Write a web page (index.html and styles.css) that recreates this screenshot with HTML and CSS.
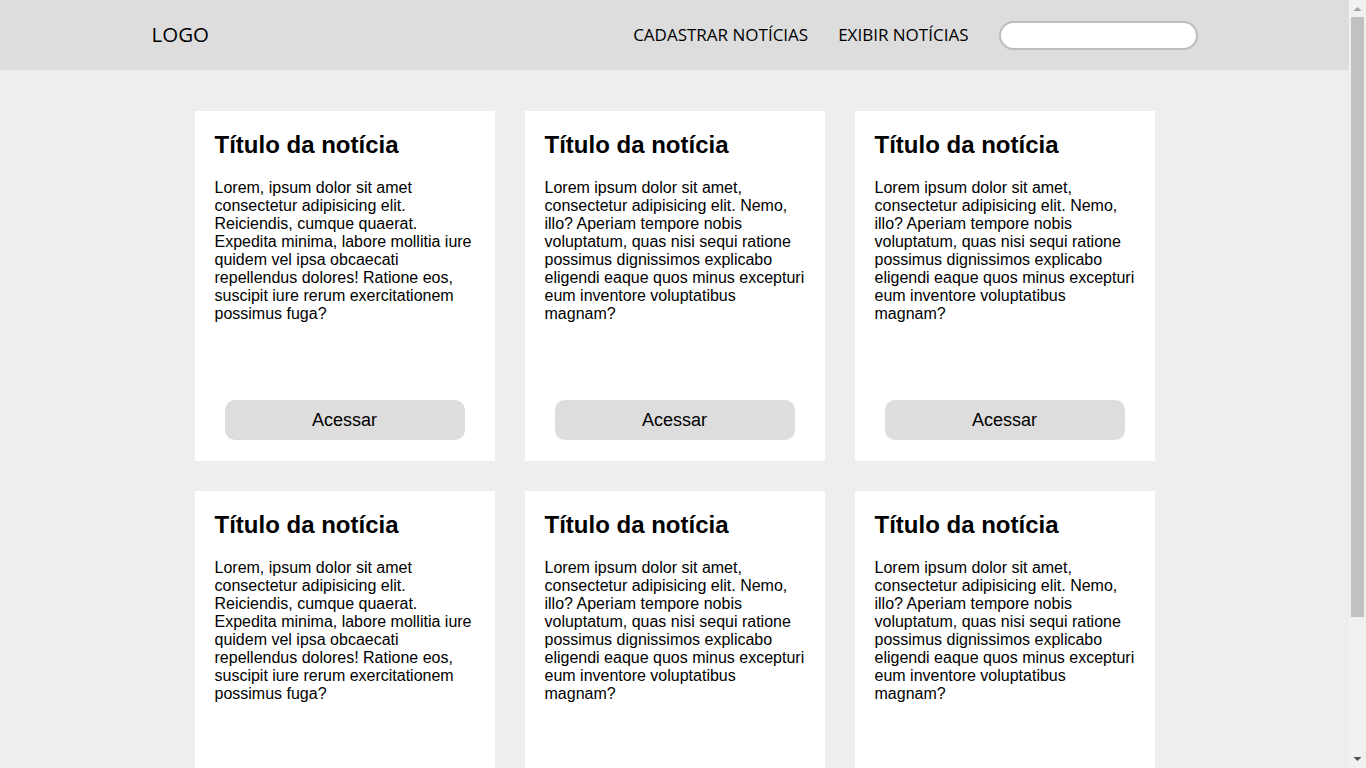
FILE: index.html
```html
<!DOCTYPE html>
<html lang="pt-BR">
<head>
<meta charset="utf-8">
<title>Notícias</title>
<link rel="stylesheet" href="styles.css">
</head>
<body>
<div class="page">
  <header class="topbar">
    <div class="topbar-inner">
      <div class="logo">LOGO</div>
      <nav class="nav">
        <a class="nav-link" href="#">CADASTRAR NOTÍCIAS</a>
        <a class="nav-link" href="#">EXIBIR NOTÍCIAS</a>
        <input class="search" type="text">
      </nav>
    </div>
  </header>
  <main class="grid">
    <article class="card">
      <h2 class="card-title">Título da notícia</h2>
      <p class="card-text">Lorem, ipsum dolor sit amet consectetur adipisicing elit. Reiciendis, cumque quaerat. Expedita minima, labore mollitia iure quidem vel ipsa obcaecati repellendus dolores! Ratione eos, suscipit iure rerum exercitationem possimus fuga?</p>
      <button class="card-btn">Acessar</button>
    </article>
    <article class="card">
      <h2 class="card-title">Título da notícia</h2>
      <p class="card-text">Lorem ipsum dolor sit amet, consectetur adipisicing elit. Nemo, illo? Aperiam tempore nobis voluptatum, quas nisi sequi ratione possimus dignissimos explicabo eligendi eaque quos minus excepturi eum inventore voluptatibus magnam?</p>
      <button class="card-btn">Acessar</button>
    </article>
    <article class="card">
      <h2 class="card-title">Título da notícia</h2>
      <p class="card-text">Lorem ipsum dolor sit amet, consectetur adipisicing elit. Nemo, illo? Aperiam tempore nobis voluptatum, quas nisi sequi ratione possimus dignissimos explicabo eligendi eaque quos minus excepturi eum inventore voluptatibus magnam?</p>
      <button class="card-btn">Acessar</button>
    </article>
    <article class="card">
      <h2 class="card-title">Título da notícia</h2>
      <p class="card-text">Lorem, ipsum dolor sit amet consectetur adipisicing elit. Reiciendis, cumque quaerat. Expedita minima, labore mollitia iure quidem vel ipsa obcaecati repellendus dolores! Ratione eos, suscipit iure rerum exercitationem possimus fuga?</p>
      <button class="card-btn">Acessar</button>
    </article>
    <article class="card">
      <h2 class="card-title">Título da notícia</h2>
      <p class="card-text">Lorem ipsum dolor sit amet, consectetur adipisicing elit. Nemo, illo? Aperiam tempore nobis voluptatum, quas nisi sequi ratione possimus dignissimos explicabo eligendi eaque quos minus excepturi eum inventore voluptatibus magnam?</p>
      <button class="card-btn">Acessar</button>
    </article>
    <article class="card">
      <h2 class="card-title">Título da notícia</h2>
      <p class="card-text">Lorem ipsum dolor sit amet, consectetur adipisicing elit. Nemo, illo? Aperiam tempore nobis voluptatum, quas nisi sequi ratione possimus dignissimos explicabo eligendi eaque quos minus excepturi eum inventore voluptatibus magnam?</p>
      <button class="card-btn">Acessar</button>
    </article>
  </main>
</div>
<div class="scrollbar" aria-hidden="true">
  <svg class="sb-arrow" width="17" height="17" viewBox="0 0 17 17"><path d="M4.5 11 L8.5 7 L12.5 11 Z" fill="#a3a3a3"/></svg>
  <div class="sb-track"><div class="sb-thumb"></div></div>
  <svg class="sb-arrow" width="17" height="17" viewBox="0 0 17 17"><path d="M4.5 6 L12.5 6 L8.5 10 Z" fill="#505050"/></svg>
</div>
</body>
</html>
```
FILE: styles.css
```css
* { box-sizing: border-box; }

html, body {
  margin: 0;
  padding: 0;
}

body {
  background: #eeeeee;
  font-family: "Liberation Sans", Arial, sans-serif;
  color: #000;
}

.page {
  margin-right: 17px;
}

.topbar {
  background: #dddddd;
  height: 70px;
}

.topbar-inner {
  width: 1046px;
  height: 70px;
  margin: 0 auto;
  display: flex;
  align-items: center;
  justify-content: space-between;
}

.logo {
  font-family: "Open Sans", sans-serif;
  font-size: 20.5px;
  line-height: 28px;
  padding-bottom: 2px;
}

.nav {
  display: flex;
  align-items: center;
  gap: 30px;
}

.nav-link {
  font-family: "Open Sans", sans-serif;
  font-size: 17px;
  line-height: 24px;
  color: #000;
  text-decoration: none;
}

.search {
  width: 199px;
  height: 29px;
  border: 2px solid #bdbdbd;
  border-radius: 15px;
  background: #fff;
  outline: none;
}

.grid {
  width: 960px;
  margin: 41px auto 0;
  padding-bottom: 99px;
  display: grid;
  grid-template-columns: repeat(3, 300px);
  gap: 30px;
}

.card {
  background: #fff;
  height: 350px;
  padding: 20px 20px 21px;
  display: flex;
  flex-direction: column;
}

.card-title {
  margin: 0 0 20px;
  font-size: 24px;
  line-height: 28px;
  font-weight: bold;
}

.card-text {
  margin: 0;
  font-size: 16px;
  line-height: 18px;
}

.card-btn {
  margin: auto 10px 0;
  height: 40px;
  border: none;
  border-radius: 10px;
  background: #dddddd;
  font-family: "Liberation Sans", Arial, sans-serif;
  font-size: 18px;
  color: #000;
}

.scrollbar {
  position: fixed;
  top: 0;
  right: 0;
  width: 17px;
  height: 100vh;
  background: #f1f1f1;
  display: flex;
  flex-direction: column;
}

.sb-arrow {
  display: block;
  flex: none;
}

.sb-track {
  flex: 1;
  padding: 0 2px;
}

.sb-thumb {
  height: 600px;
  background: #c1c1c1;
}
```
